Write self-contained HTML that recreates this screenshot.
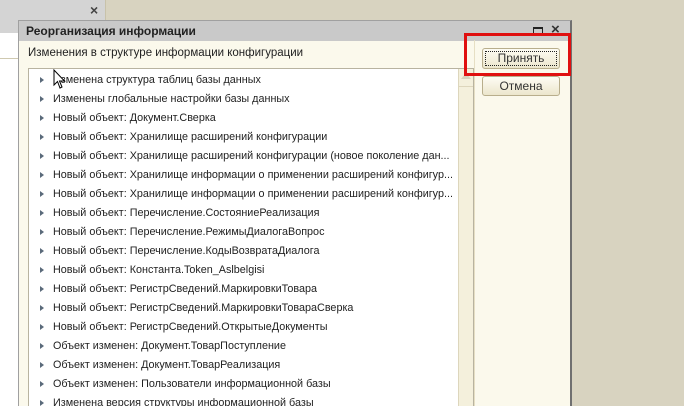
<!DOCTYPE html>
<html><head><meta charset="utf-8"><style>
*{margin:0;padding:0;box-sizing:border-box}
html{width:684px;height:406px;overflow:hidden}
body{width:684px;height:406px;position:relative;overflow:hidden;background:#d8d3c0;font-family:"Liberation Sans",sans-serif;font-size:10.8px;color:#222}
.abs{position:absolute}
.row{position:absolute;left:40px;height:19px;line-height:19px;white-space:nowrap}
.row:before{content:"";position:absolute;left:0;top:6px;border-left:4px solid #5a6a7a;border-top:3.5px solid transparent;border-bottom:3.5px solid transparent}
.row span{margin-left:13px}
.btn{position:absolute;border:1px solid #b8ae8c;border-radius:3px;background:linear-gradient(#fdfcf4,#ece6cc);text-align:center;line-height:18px;font-size:12px;color:#333}
</style></head><body>
<div class="abs" style="left:0;top:0;width:106px;height:33px;background:#d4d4d4;border-right:1px solid #c8c2aa"></div>
<div class="abs" style="left:0;top:33px;width:106px;height:373px;background:#fff;border-right:1px solid #c8c2aa"></div>
<div class="abs" style="left:0;top:58px;width:20px;height:1px;background:#cfc9b0"></div>
<div class="abs" style="left:90px;top:2px;font-size:14px;font-weight:bold;color:#444">×</div>
<div class="abs" style="left:18px;top:20px;width:554px;height:386px;background:#fbf9ec;border:1px solid #a0a0a0;border-bottom:none;border-right:2px solid #707070"></div>
<div class="abs" style="left:19px;top:21px;width:551px;height:20px;background:#c9c9c9"></div>
<div class="abs" style="left:26px;top:24px;font-weight:bold;font-size:12px;color:#222">Реорганизация информации</div>
<div class="abs" style="left:533px;top:27px;width:10px;height:9px;border:1.5px solid #222;border-top-width:2px"></div>
<div class="abs" style="left:551px;top:21px;font-size:15px;font-weight:bold;color:#333">×</div>
<div class="abs" style="left:28px;top:47px;font-size:11.5px">Изменения в структуре информации конфигурации</div>
<div class="abs" style="left:28px;top:68px;width:446px;height:338px;background:#fff;border:1px solid #b8b3a0;border-bottom:none"></div>
<div class="abs" style="left:458px;top:69px;width:15px;height:337px;background:#f4f0dc;border-left:1px solid #ddd6bc"></div>
<div class="abs" style="left:461px;top:73px;border-bottom:6px solid #d8d2bc;border-left:5px solid transparent;border-right:5px solid transparent"></div>
<div class="abs" style="left:458px;top:86px;width:15px;height:1px;background:#ddd6bc"></div>
<div class="abs" style="left:474px;top:40px;width:1px;height:366px;background:#e6dfc4"></div>
<div class="row" style="top:71px"><span>Изменена структура таблиц базы данных</span></div>
<div class="row" style="top:90px"><span>Изменены глобальные настройки базы данных</span></div>
<div class="row" style="top:109px"><span>Новый объект: Документ.Сверка</span></div>
<div class="row" style="top:128px"><span>Новый объект: Хранилище расширений конфигурации</span></div>
<div class="row" style="top:147px"><span>Новый объект: Хранилище расширений конфигурации (новое поколение дан...</span></div>
<div class="row" style="top:166px"><span>Новый объект: Хранилище информации о применении расширений конфигур...</span></div>
<div class="row" style="top:185px"><span>Новый объект: Хранилище информации о применении расширений конфигур...</span></div>
<div class="row" style="top:204px"><span>Новый объект: Перечисление.СостояниеРеализация</span></div>
<div class="row" style="top:223px"><span>Новый объект: Перечисление.РежимыДиалогаВопрос</span></div>
<div class="row" style="top:242px"><span>Новый объект: Перечисление.КодыВозвратаДиалога</span></div>
<div class="row" style="top:261px"><span>Новый объект: Константа.Token_Aslbelgisi</span></div>
<div class="row" style="top:280px"><span>Новый объект: РегистрСведений.МаркировкиТовара</span></div>
<div class="row" style="top:299px"><span>Новый объект: РегистрСведений.МаркировкиТовараСверка</span></div>
<div class="row" style="top:318px"><span>Новый объект: РегистрСведений.ОткрытыеДокументы</span></div>
<div class="row" style="top:337px"><span>Объект изменен: Документ.ТоварПоступление</span></div>
<div class="row" style="top:356px"><span>Объект изменен: Документ.ТоварРеализация</span></div>
<div class="row" style="top:375px"><span>Объект изменен: Пользователи информационной базы</span></div>
<div class="row" style="top:394px"><span>Изменена версия структуры информационной базы</span></div>
<div class="btn" style="left:482px;top:48px;width:78px;height:21px"><div style="position:absolute;left:2px;top:2px;right:2px;bottom:2px;border:1px dotted #222"></div>Принять</div>
<div class="btn" style="left:482px;top:76px;width:78px;height:20px">Отмена</div>
<div class="abs" style="left:464px;top:33px;width:107px;height:43px;border:3px solid #e01010"></div>
<svg class="abs" style="left:53px;top:69px" width="14" height="22" viewBox="0 0 14 22"><path d="M1 1 L1 16 L4.5 12.5 L7 19 L9 18 L6.5 12 L11.5 12 Z" fill="#fff" stroke="#000" stroke-width="1"/></svg>
</body></html>
